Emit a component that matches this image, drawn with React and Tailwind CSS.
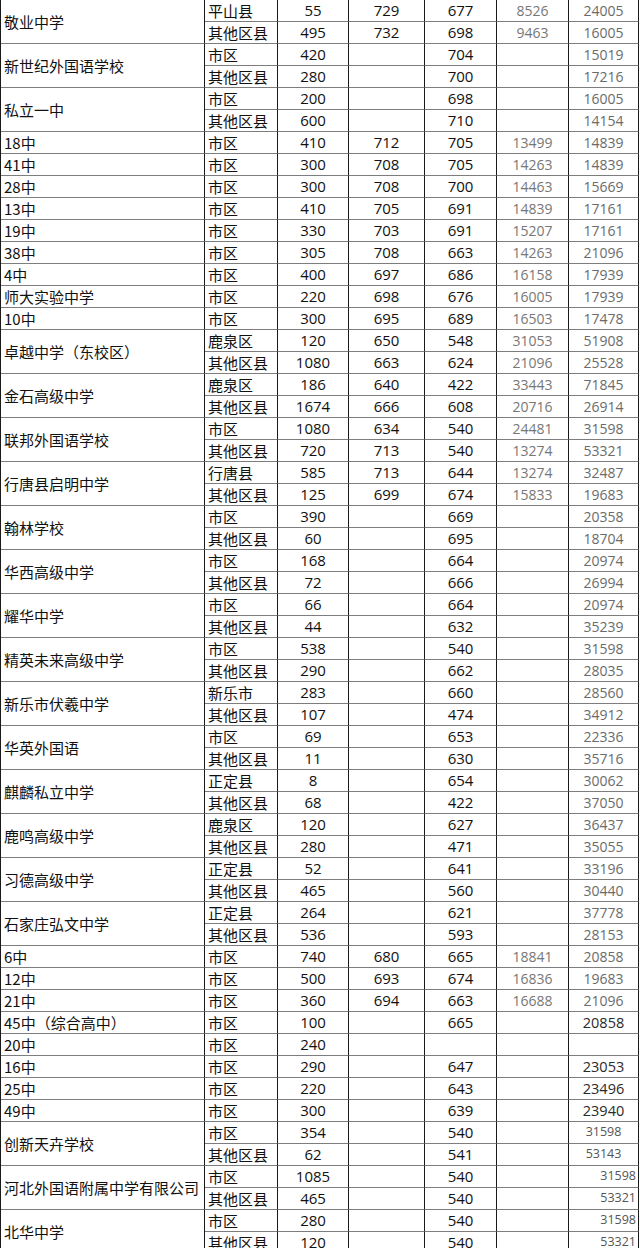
import React from "react";

// 学校, [区域, 人数, 分数A, 分数B, 位次A, 位次B]
const schools = [
  ["敬业中学", [["平山县", "55", "729", "677", "8526", "24005"], ["其他区县", "495", "732", "698", "9463", "16005"]]],
  ["新世纪外国语学校", [["市区", "420", "", "704", "", "15019"], ["其他区县", "280", "", "700", "", "17216"]]],
  ["私立一中", [["市区", "200", "", "698", "", "16005"], ["其他区县", "600", "", "710", "", "14154"]]],
  ["18中", [["市区", "410", "712", "705", "13499", "14839"]]],
  ["41中", [["市区", "300", "708", "705", "14263", "14839"]]],
  ["28中", [["市区", "300", "708", "700", "14463", "15669"]]],
  ["13中", [["市区", "410", "705", "691", "14839", "17161"]]],
  ["19中", [["市区", "330", "703", "691", "15207", "17161"]]],
  ["38中", [["市区", "305", "708", "663", "14263", "21096"]]],
  ["4中", [["市区", "400", "697", "686", "16158", "17939"]]],
  ["师大实验中学", [["市区", "220", "698", "676", "16005", "17939"]]],
  ["10中", [["市区", "300", "695", "689", "16503", "17478"]]],
  ["卓越中学（东校区）", [["鹿泉区", "120", "650", "548", "31053", "51908"], ["其他区县", "1080", "663", "624", "21096", "25528"]]],
  ["金石高级中学", [["鹿泉区", "186", "640", "422", "33443", "71845"], ["其他区县", "1674", "666", "608", "20716", "26914"]]],
  ["联邦外国语学校", [["市区", "1080", "634", "540", "24481", "31598"], ["其他区县", "720", "713", "540", "13274", "53321"]]],
  ["行唐县启明中学", [["行唐县", "585", "713", "644", "13274", "32487"], ["其他区县", "125", "699", "674", "15833", "19683"]]],
  ["翰林学校", [["市区", "390", "", "669", "", "20358"], ["其他区县", "60", "", "695", "", "18704"]]],
  ["华西高级中学", [["市区", "168", "", "664", "", "20974"], ["其他区县", "72", "", "666", "", "26994"]]],
  ["耀华中学", [["市区", "66", "", "664", "", "20974"], ["其他区县", "44", "", "632", "", "35239"]]],
  ["精英未来高级中学", [["市区", "538", "", "540", "", "31598"], ["其他区县", "290", "", "662", "", "28035"]]],
  ["新乐市伏羲中学", [["新乐市", "283", "", "660", "", "28560"], ["其他区县", "107", "", "474", "", "34912"]]],
  ["华英外国语", [["市区", "69", "", "653", "", "22336"], ["其他区县", "11", "", "630", "", "35716"]]],
  ["麒麟私立中学", [["正定县", "8", "", "654", "", "30062"], ["其他区县", "68", "", "422", "", "37050"]]],
  ["鹿鸣高级中学", [["鹿泉区", "120", "", "627", "", "36437"], ["其他区县", "280", "", "471", "", "35055"]]],
  ["习德高级中学", [["正定县", "52", "", "641", "", "33196"], ["其他区县", "465", "", "560", "", "30440"]]],
  ["石家庄弘文中学", [["正定县", "264", "", "621", "", "37778"], ["其他区县", "536", "", "593", "", "28153"]]],
  ["6中", [["市区", "740", "680", "665", "18841", "20858"]]],
  ["12中", [["市区", "500", "693", "674", "16836", "19683"]]],
  ["21中", [["市区", "360", "694", "663", "16688", "21096"]]],
  ["45中（综合高中）", [["市区", "100", "", "665", "", "20858"]], "dark"],
  ["20中", [["市区", "240", "", "", "", ""]], "dark"],
  ["16中", [["市区", "290", "", "647", "", "23053"]], "dark"],
  ["25中", [["市区", "220", "", "643", "", "23496"]], "dark"],
  ["49中", [["市区", "300", "", "639", "", "23940"]], "dark"],
  ["创新天卉学校", [["市区", "354", "", "540", "", "31598"], ["其他区县", "62", "", "541", "", "53143"]], "small"],
  ["河北外国语附属中学有限公司", [["市区", "1085", "", "540", "", "31598"], ["其他区县", "465", "", "540", "", "53321"]], "right"],
  ["北华中学", [["市区", "280", "", "540", "", "31598"], ["其他区县", "120", "", "540", "", "53321"]], "right"],
];

const cell = "border-r border-b border-r-[#1a1a1a] border-b-[#7d7d7d] flex items-center";
const cjk = { fontFamily: '"Noto Sans CJK SC", "Noto Sans", sans-serif' };

const lastColClass = {
  normal: "justify-center text-[14px] text-[#6b6b6b]",
  dark: "justify-center text-[14.5px] text-[#2a2a2a] font-medium",
  small: "justify-center text-[12.5px] text-[#555]",
  right: "justify-end pr-[2px] text-[12.5px] text-[#555]",
};

export default function App() {
  return (
    <div className="w-[640px] h-[1248px] overflow-hidden bg-white text-[#111]">
      <div
        className="grid grid-cols-[204px_73px_71px_76px_72px_72px_70px] auto-rows-[22px] border-l border-l-[#1a1a1a] font-['Open_Sans',sans-serif]"
      >
        {schools.map(([name, rows, variant = "normal"]) => (
          <React.Fragment key={name}>
            <div
              className={`${cell} pl-[3px] text-[15px] leading-none whitespace-nowrap ${rows.length === 2 ? "row-span-2" : ""}`}
              style={cjk}
            >
              {name}
            </div>
            {rows.map((r, i) => (
              <React.Fragment key={i}>
                <div className={`${cell} pl-[3px] text-[15px] leading-none`} style={cjk}>
                  {r[0]}
                </div>
                <div className={`${cell} justify-center text-[15px]`}>{r[1]}</div>
                <div className={`${cell} justify-center text-[15px]`}>{r[2]}</div>
                <div className={`${cell} justify-center text-[15px]`}>{r[3]}</div>
                <div className={`${cell} justify-center text-[14px] text-[#777]`}>{r[4]}</div>
                <div className={`${cell} ${lastColClass[variant]}`}>{r[5]}</div>
              </React.Fragment>
            ))}
          </React.Fragment>
        ))}
      </div>
    </div>
  );
}
